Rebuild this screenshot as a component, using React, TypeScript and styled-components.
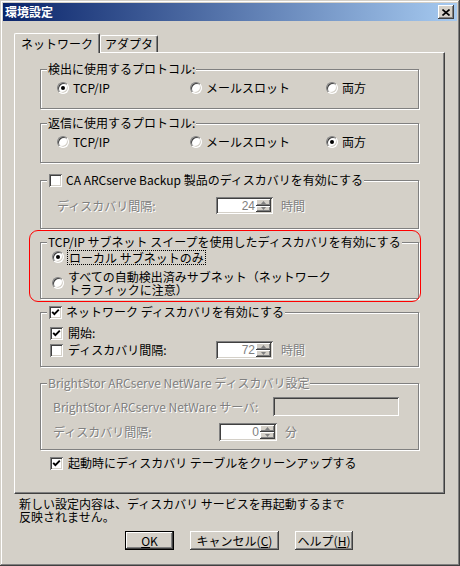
import * as React from 'react';
import styled, { createGlobalStyle, css } from 'styled-components';

const FACE = '#d4d0c8';
const SHADOW = '#808080';
const DARK = '#404040';
const LIGHT = '#ffffff';

const GlobalStyle = createGlobalStyle`
  html, body {
    margin: 0;
    padding: 0;
    background: ${FACE};
  }
  body {
    font-family: "Noto Sans CJK JP", "Liberation Sans", sans-serif;
    font-size: 12px;
    line-height: 14px;
    color: #000;
  }
  * {
    box-sizing: border-box;
  }
`;

const raised = css`
  box-shadow: inset -1px -1px ${DARK}, inset 1px 1px ${LIGHT},
    inset -2px -2px ${SHADOW}, inset 2px 2px ${FACE};
`;

const sunken = css`
  box-shadow: inset 1px 1px ${SHADOW}, inset -1px -1px ${LIGHT},
    inset 2px 2px ${DARK}, inset -2px -2px ${FACE};
`;

const Window = styled.div`
  width: 460px;
  height: 566px;
  padding: 3px;
  background: ${FACE};
  box-shadow: inset -1px -1px ${DARK}, inset 1px 1px ${FACE},
    inset -2px -2px ${SHADOW}, inset 2px 2px ${LIGHT};
  display: flex;
  flex-direction: column;
`;

const TitleBar = styled.div`
  height: 18px;
  display: flex;
  align-items: center;
  justify-content: space-between;
  padding: 0 3px 0 2px;
  background: linear-gradient(to right, #0a246a, #a6caf0);
  color: #fff;
  font-weight: bold;
`;

const CloseButton = styled.div`
  width: 16px;
  height: 14px;
  background: ${FACE};
  display: flex;
  align-items: center;
  justify-content: center;
  ${raised};
`;

const Body = styled.div`
  display: flex;
  flex-direction: column;
  padding: 12px 12px 0 11px;
`;

const TabStrip = styled.div`
  height: 19px;
  display: flex;
  align-items: flex-end;
  position: relative;
  z-index: 1;
`;

const Tab = styled.div<{ $active?: boolean }>`
  height: ${(p) => (p.$active ? 20 : 17)}px;
  margin-bottom: ${(p) => (p.$active ? -1 : 0)}px;
  padding: 0 ${(p) => (p.$active ? 6 : 4)}px;
  display: flex;
  align-items: center;
  background: ${FACE};
  border-top: 1px solid ${LIGHT};
  border-left: 1px solid ${LIGHT};
  border-right: 1px solid ${DARK};
  border-radius: 2px 2px 0 0;
  box-shadow: inset -1px 0 ${SHADOW};
`;

const Panel = styled.div`
  display: flex;
  flex-direction: column;
  border: 1px solid;
  border-color: ${LIGHT} ${DARK} ${DARK} ${LIGHT};
  box-shadow: inset -1px -1px ${SHADOW};
  padding: 0 25px 23px 25px;
`;

const Group = styled.div<{ $mt: number; $pb: number }>`
  position: relative;
  display: flex;
  flex-direction: column;
  margin-top: ${(p) => p.$mt}px;
  padding-bottom: ${(p) => p.$pb}px;
  border: 1px solid ${SHADOW};
  box-shadow: inset 1px 1px ${LIGHT}, 1px 1px ${LIGHT};
`;

const Legend = styled.div<{ $pl?: number }>`
  align-self: flex-start;
  height: 14px;
  display: flex;
  align-items: center;
  gap: 4px;
  margin: -8px 0 0 6px;
  padding: 0 1px 0 ${(p) => p.$pl ?? 1}px;
  background: ${FACE};
  white-space: nowrap;
`;

const Text = styled.span<{ $disabled?: boolean }>`
  display: inline-block;
  line-height: 14px;
  white-space: nowrap;
  color: ${(p) => (p.$disabled ? SHADOW : '#000')};
  text-shadow: ${(p) => (p.$disabled ? `1px 1px 0 ${LIGHT}` : 'none')};
`;

const RadioRow = styled.div<{ $mt: number; $pl: number }>`
  display: grid;
  grid-template-columns: 133px 136px auto;
  align-items: center;
  height: 14px;
  margin-top: ${(p) => p.$mt}px;
  padding-left: ${(p) => p.$pl}px;
`;

const Row = styled.div<{ $mt: number; $pl: number; $h?: number }>`
  display: flex;
  align-items: center;
  height: ${(p) => p.$h ?? 14}px;
  margin-top: ${(p) => p.$mt}px;
  padding-left: ${(p) => p.$pl}px;
`;

const Option = styled.label<{ $w?: number; $gap?: number }>`
  display: flex;
  align-items: center;
  gap: ${(p) => p.$gap ?? 4}px;
  width: ${(p) => (p.$w ? `${p.$w}px` : 'auto')};
  flex-shrink: 0;
`;

const FieldLabel = styled(Text)<{ $w: number }>`
  width: ${(p) => p.$w}px;
  flex-shrink: 0;
`;

const Unit = styled(Text)`
  margin-left: 8px;
`;

const RadioCircle = styled.span<{ $checked?: boolean }>`
  width: 12px;
  height: 12px;
  flex-shrink: 0;
  border-radius: 50%;
  background: #fff;
  border: 1px solid;
  border-color: ${SHADOW} ${LIGHT} ${LIGHT} ${SHADOW};
  box-shadow: inset 1px 1px 0 ${DARK}, inset -1px -1px 0 ${FACE};
  display: flex;
  align-items: center;
  justify-content: center;

  &::after {
    content: '';
    width: 4px;
    height: 4px;
    border-radius: 50%;
    background: ${(p) => (p.$checked ? '#000' : 'transparent')};
  }
`;

const CheckSquare = styled.span`
  width: 13px;
  height: 13px;
  flex-shrink: 0;
  background: #fff;
  padding: 2px;
  display: flex;
  ${sunken};
`;

const Focus = styled.span`
  display: inline-block;
  line-height: 13px;
  outline: 1px dotted #000;
  padding: 0 1px;
`;

const Lines = styled.div`
  display: flex;
  flex-direction: column;
`;

const Line = styled.div<{ $h: number }>`
  height: ${(p) => p.$h}px;
  line-height: ${(p) => p.$h}px;
  white-space: nowrap;
`;

const SpinBox = styled.div<{ $w: number; $h: number }>`
  width: ${(p) => p.$w}px;
  height: ${(p) => p.$h}px;
  flex-shrink: 0;
  background: #fff;
  padding: 2px;
  display: flex;
  ${sunken};
`;

const SpinValue = styled.div`
  flex: 1;
  display: flex;
  align-items: center;
  justify-content: flex-end;
  padding-right: 1px;
  color: ${SHADOW};
  font-family: "Liberation Sans", sans-serif;
`;

const SpinButtons = styled.div`
  width: 15px;
  display: flex;
  flex-direction: column;
`;

const SpinButton = styled.div`
  flex: 1;
  background: ${FACE};
  display: flex;
  align-items: center;
  justify-content: center;
  ${raised};
`;

const TextField = styled.div<{ $w: number; $h: number }>`
  width: ${(p) => p.$w}px;
  height: ${(p) => p.$h}px;
  background: ${FACE};
  ${sunken};
`;

const Highlight = styled.div`
  position: absolute;
  top: -13px;
  left: -12px;
  right: -3px;
  bottom: -4px;
  border: 1.5px solid #f00;
  border-radius: 9px;
  pointer-events: none;
`;

const Note = styled(Lines)`
  margin-top: 3px;
  padding-left: 5px;
`;

const ButtonRow = styled.div`
  display: flex;
  gap: 16px;
  margin-top: 8px;
  padding-left: 111px;
`;

const Button = styled.div<{ $w: number; $default?: boolean }>`
  width: ${(p) => p.$w}px;
  height: 19px;
  display: flex;
  align-items: center;
  justify-content: center;
  background: ${FACE};
  ${(p) =>
    p.$default
      ? css`
          border: 1px solid #000;
          box-shadow: inset -1px -1px ${DARK}, inset 1px 1px ${LIGHT},
            inset -2px -2px ${SHADOW};
        `
      : raised};
`;

const Radio = ({ checked }: { checked?: boolean }) => <RadioCircle $checked={checked} />;

const Check = ({ checked }: { checked?: boolean }) => (
  <CheckSquare>
    {checked && (
      <svg width="9" height="9" viewBox="0 0 9 9">
        <polyline points="1.2,3.8 3.4,6.2 7.8,1.6" fill="none" stroke="#000" strokeWidth="1.9" />
      </svg>
    )}
  </CheckSquare>
);

const Arrow = ({ up }: { up?: boolean }) => (
  <svg width="5" height="3" viewBox="0 0 5 3">
    <polygon points={up ? '2.5,0 5,3 0,3' : '0,0 5,0 2.5,3'} fill={SHADOW} />
  </svg>
);

const Spin = ({ value, w, h }: { value: string; w: number; h: number }) => (
  <SpinBox $w={w} $h={h}>
    <SpinValue>{value}</SpinValue>
    <SpinButtons>
      <SpinButton>
        <Arrow up />
      </SpinButton>
      <SpinButton>
        <Arrow />
      </SpinButton>
    </SpinButtons>
  </SpinBox>
);

export default function App() {
  return (
    <Window>
      <GlobalStyle />
      <TitleBar>
        <span>環境設定</span>
        <CloseButton>
          <svg width="8" height="7" viewBox="0 0 8 7">
            <path d="M0.5 0.5 L7.5 6.5 M7.5 0.5 L0.5 6.5" stroke="#000" strokeWidth="1.6" />
          </svg>
        </CloseButton>
      </TitleBar>

      <Body>
        <TabStrip>
          <Tab $active>ネットワーク</Tab>
          <Tab>アダプタ</Tab>
        </TabStrip>

        <Panel>
          <Group $mt={16} $pb={13}>
            <Legend>検出に使用するプロトコル:</Legend>
            <RadioRow $mt={5} $pl={16}>
              <Option>
                <Radio checked />
                <Text>TCP/IP</Text>
              </Option>
              <Option>
                <Radio />
                <Text>メールスロット</Text>
              </Option>
              <Option>
                <Radio />
                <Text>両方</Text>
              </Option>
            </RadioRow>
          </Group>

          <Group $mt={14} $pb={13}>
            <Legend>返信に使用するプロトコル:</Legend>
            <RadioRow $mt={5} $pl={16}>
              <Option>
                <Radio />
                <Text>TCP/IP</Text>
              </Option>
              <Option>
                <Radio />
                <Text>メールスロット</Text>
              </Option>
              <Option>
                <Radio checked />
                <Text>両方</Text>
              </Option>
            </RadioRow>
          </Group>

          <Group $mt={17} $pb={14}>
            <Legend $pl={2}>
              <Check />
              <Text>CA ARCserve Backup 製品のディスカバリを有効にする</Text>
            </Legend>
            <Row $mt={10} $pl={16} $h={17}>
              <FieldLabel $w={159} $disabled>
                ディスカバリ間隔:
              </FieldLabel>
              <Spin value="24" w={57} h={17} />
              <Unit $disabled>時間</Unit>
            </Row>
          </Group>

          <Group $mt={13} $pb={2}>
            <Highlight />
            <Legend>
              <Text>TCP/IP サブネット スイープを使用したディスカバリを有効にする</Text>
            </Legend>
            <Row $mt={1} $pl={11}>
              <Option>
                <Radio checked />
                <Focus>ローカル サブネットのみ</Focus>
              </Option>
            </Row>
            <Row $mt={6} $pl={11} $h={26}>
              <Option>
                <Radio />
                <Lines>
                  <Line $h={13}>すべての自動検出済みサブネット（ネットワーク</Line>
                  <Line $h={13}>トラフィックに注意）</Line>
                </Lines>
              </Option>
            </Row>
          </Group>

          <Group $mt={13} $pb={7}>
            <Legend $pl={2}>
              <Check checked />
              <Text>ネットワーク ディスカバリを有効にする</Text>
            </Legend>
            <Row $mt={7} $pl={9}>
              <Option $gap={5}>
                <Check checked />
                <Text>開始:</Text>
              </Option>
            </Row>
            <Row $mt={1} $pl={9} $h={18}>
              <Option $w={166} $gap={5}>
                <Check />
                <Text>ディスカバリ間隔:</Text>
              </Option>
              <Spin value="72" w={57} h={18} />
              <Unit $disabled>時間</Unit>
            </Row>
          </Group>

          <Group $mt={16} $pb={8}>
            <Legend>
              <Text $disabled>BrightStor ARCserve NetWare ディスカバリ設定</Text>
            </Legend>
            <Row $mt={7} $pl={12} $h={19}>
              <FieldLabel $w={220} $disabled>
                BrightStor ARCserve NetWare サーバ:
              </FieldLabel>
              <TextField $w={126} $h={19} />
            </Row>
            <Row $mt={7} $pl={12} $h={18}>
              <FieldLabel $w={166} $disabled>
                ディスカバリ間隔:
              </FieldLabel>
              <Spin value="0" w={58} h={18} />
              <Unit $disabled>分</Unit>
            </Row>
          </Group>

          <Row $mt={6} $pl={10}>
            <Option $gap={5}>
              <Check checked />
              <Text>起動時にディスカバリ テーブルをクリーンアップする</Text>
            </Option>
          </Row>
        </Panel>

        <Note>
          <Line $h={13}>新しい設定内容は、ディスカバリ サービスを再起動するまで</Line>
          <Line $h={13}>反映されません。</Line>
        </Note>

        <ButtonRow>
          <Button $w={49} $default>
            <span>
              <u>O</u>K
            </span>
          </Button>
          <Button $w={89}>
            <span>
              キャンセル(<u>C</u>)
            </span>
          </Button>
          <Button $w={58}>
            <span>
              ヘルプ(<u>H</u>)
            </span>
          </Button>
        </ButtonRow>
      </Body>
    </Window>
  );
}
